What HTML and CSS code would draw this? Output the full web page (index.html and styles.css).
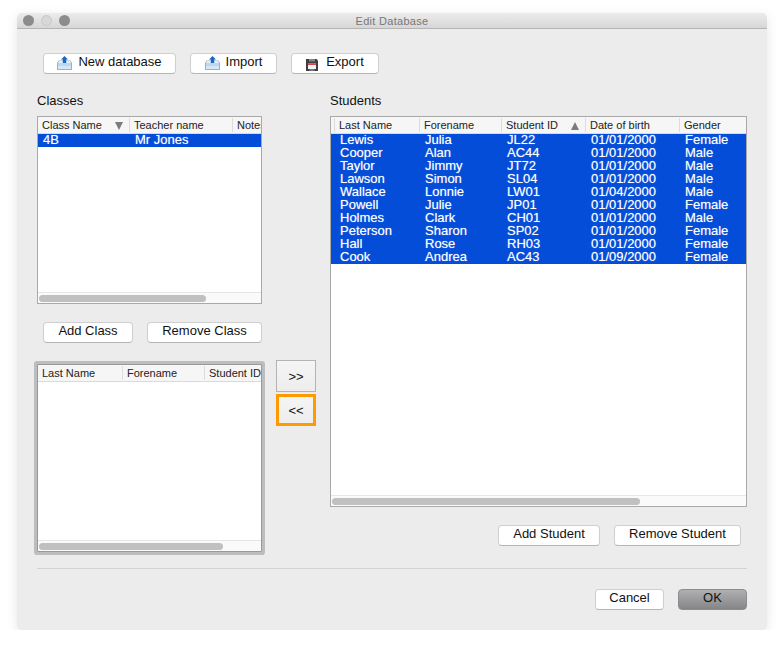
FILE: index.html
```html
<!DOCTYPE html>
<html lang="en">
<head>
  <meta charset="UTF-8">
  <title>Edit Database</title>
  <link rel="stylesheet" href="styles.css">
</head>
<body>
  <div class="window">
    <div class="titlebar">
      <div class="lights">
        <span class="light"></span>
        <span class="light light-off"></span>
        <span class="light"></span>
      </div>
      <div class="title">Edit Database</div>
    </div>

    <div class="content">
      <div class="toolbar">
        <button class="btn btn-new">
          <svg class="icon" viewBox="0 0 15 14"><path d="M1.5 4.5h12L15 7v7H0V7z" fill="#8fb4d6"/><path d="M2 5h11l1 2H1z" fill="#e4eef6"/><path d="M1 7h13v6H1z" fill="#bcd7ee"/><path d="M1 10h13v3H1z" fill="#d5e6f5"/><path d="M7.5 0 11 3.4H9.2V7H5.8V3.4H4z" fill="#1c66c6"/></svg>
          New database
        </button>
        <button class="btn btn-import">
          <svg class="icon" viewBox="0 0 15 14"><path d="M1.5 4.5h12L15 7v7H0V7z" fill="#8fb4d6"/><path d="M2 5h11l1 2H1z" fill="#e4eef6"/><path d="M1 7h13v6H1z" fill="#bcd7ee"/><path d="M1 10h13v3H1z" fill="#d5e6f5"/><path d="M7.5 0 11 3.4H9.2V7H5.8V3.4H4z" fill="#1c66c6"/></svg>
          Import
        </button>
        <button class="btn btn-export">
          <svg class="icon icon-disk" viewBox="0 0 12 12"><path d="M0 0h10.5L12 1.5V12H0z" fill="#3d3d42"/><path d="M3 0h6v2.5H3z" fill="#85858a"/><path d="M2 4.5h8V10H2z" fill="#f2f2f2"/><path d="M2 4.5h8V6H2z" fill="#d5444c"/><path d="M3.5 10h5v2h-5z" fill="#77777c"/></svg>
          Export
        </button>
      </div>

      <div class="columns">
        <!-- classes and the students in the chosen class -->
        <div class="left-col">
          <div class="label">Classes</div>
          <div class="table classes">
            <div class="head">
              <div class="th">Class Name<span class="sort sort-down"></span></div>
              <div class="th">Teacher name</div>
              <div class="th">Notes</div>
            </div>
            <div class="rows">
              <div class="tr">
                <div class="td">4B</div>
                <div class="td">Mr Jones</div>
                <div class="td"></div>
              </div>
            </div>
            <div class="track"><div class="thumb"></div></div>
          </div>

          <div class="class-actions">
            <button class="btn btn-add-class">Add Class</button>
            <button class="btn btn-remove-class">Remove Class</button>
          </div>

          <div class="members">
            <div class="table class-students">
              <div class="head">
                <div class="th">Last Name</div>
                <div class="th">Forename</div>
                <div class="th">Student ID</div>
              </div>
              <div class="rows"></div>
              <div class="track"><div class="thumb"></div></div>
            </div>
            <div class="arrows">
              <button class="arrow">&gt;&gt;</button>
              <button class="arrow arrow-focus">&lt;&lt;</button>
            </div>
          </div>
        </div>

        <!-- all students -->
        <div class="right-col">
          <div class="label">Students</div>
          <div class="table students">
            <div class="head">
              <div class="th">Last Name</div>
              <div class="th">Forename</div>
              <div class="th">Student ID<span class="sort sort-up"></span></div>
              <div class="th">Date of birth</div>
              <div class="th">Gender</div>
            </div>
            <div class="rows">
              <div class="tr"><div class="td">Lewis</div><div class="td">Julia</div><div class="td">JL22</div><div class="td">01/01/2000</div><div class="td">Female</div></div>
              <div class="tr"><div class="td">Cooper</div><div class="td">Alan</div><div class="td">AC44</div><div class="td">01/01/2000</div><div class="td">Male</div></div>
              <div class="tr"><div class="td">Taylor</div><div class="td">Jimmy</div><div class="td">JT72</div><div class="td">01/01/2000</div><div class="td">Male</div></div>
              <div class="tr"><div class="td">Lawson</div><div class="td">Simon</div><div class="td">SL04</div><div class="td">01/01/2000</div><div class="td">Male</div></div>
              <div class="tr"><div class="td">Wallace</div><div class="td">Lonnie</div><div class="td">LW01</div><div class="td">01/04/2000</div><div class="td">Male</div></div>
              <div class="tr"><div class="td">Powell</div><div class="td">Julie</div><div class="td">JP01</div><div class="td">01/01/2000</div><div class="td">Female</div></div>
              <div class="tr"><div class="td">Holmes</div><div class="td">Clark</div><div class="td">CH01</div><div class="td">01/01/2000</div><div class="td">Male</div></div>
              <div class="tr"><div class="td">Peterson</div><div class="td">Sharon</div><div class="td">SP02</div><div class="td">01/01/2000</div><div class="td">Female</div></div>
              <div class="tr"><div class="td">Hall</div><div class="td">Rose</div><div class="td">RH03</div><div class="td">01/01/2000</div><div class="td">Female</div></div>
              <div class="tr"><div class="td">Cook</div><div class="td">Andrea</div><div class="td">AC43</div><div class="td">01/09/2000</div><div class="td">Female</div></div>
            </div>
            <div class="track"><div class="thumb"></div></div>
          </div>
          <div class="student-actions">
            <button class="btn btn-add-student">Add Student</button>
            <button class="btn btn-remove-student">Remove Student</button>
          </div>
        </div>
      </div>

      <div class="footer">
        <button class="btn btn-cancel">Cancel</button>
        <button class="btn btn-ok">OK</button>
      </div>
    </div>
  </div>
</body>
</html>
```

FILE: styles.css
```css
* { box-sizing: border-box; margin: 0; padding: 0; }

body {
  font-family: "Liberation Sans", Arial, sans-serif;
  font-size: 13px;
  color: #111;
  background: #fff;
  padding: 13px 17px 0;
}

.window {
  width: 750px;
  height: 617px;
  background: #ececec;
  border-radius: 5px;
  box-shadow: 0 3px 12px rgba(0,0,0,0.1);
}

/* title bar */
.titlebar {
  display: flex;
  align-items: center;
  justify-content: center;
  position: relative;
  height: 16px;
  background: linear-gradient(#ececec, #d6d6d6);
  border-bottom: 1px solid #b4b4b4;
  border-radius: 5px 5px 0 0;
}

.lights {
  position: absolute;
  left: 6px;
  top: 2px;
  display: flex;
  gap: 7px;
}

.light {
  width: 11px;
  height: 11px;
  border-radius: 50%;
  background: #8c8c8e;
}

.light-off {
  background: #d8d8d8;
  border: 1px solid #c8c8c8;
}

.title {
  font-size: 11px;
  color: #777;
  letter-spacing: 0.3px;
}

.content {
  padding: 24px 20px 0;
}

/* buttons */
.btn {
  display: inline-flex;
  align-items: center;
  justify-content: center;
  height: 21px;
  padding: 0 0 5px;
  font-family: inherit;
  font-size: 13px;
  color: #111;
  background: #fff;
  border: 1px solid #cfcfcf;
  border-bottom-color: #b5b5b5;
  border-radius: 4px;
}

.btn-new { width: 133px; }
.btn-import { width: 87px; }
.btn-export { width: 88px; }
.btn-add-class { width: 90px; }
.btn-remove-class { width: 115px; }
.btn-add-student { width: 102px; }
.btn-remove-student { width: 127px; }
.btn-cancel, .btn-ok { width: 69px; }

.btn-ok {
  background: linear-gradient(#b0b0b2, #858587);
  border-color: #8c8c8c;
}

.toolbar {
  display: flex;
  gap: 14px;
  padding-left: 6px;
  margin-bottom: 20px;
}

.icon {
  width: 15px;
  height: 14px;
  margin-right: 6px;
  margin-top: 4px;
}

.icon-disk {
  width: 12px;
  height: 12px;
  margin-right: 8px;
  margin-top: 8px;
}

.columns {
  display: flex;
  gap: 14px;
}

.left-col {
  width: 279px;
}

.right-col {
  width: 417px;
}

.label {
  font-size: 13px;
  line-height: 14px;
  margin-bottom: 8px;
}

/* list tables */
.table {
  display: flex;
  flex-direction: column;
  width: 225px;
  height: 188px;
  background: #fff;
  border: 1px solid #a9a9a9;
  overflow: hidden;
}

.head {
  flex: none;
  display: grid;
  height: 17px;
  font-size: 11px;
  background: #f6f6f6;
  border-bottom: 1px solid #dadada;
  color: #222;
}

.th {
  position: relative;
  padding-left: 4px;
  border-left: 1px solid #dcdcdc;
  white-space: nowrap;
  overflow: hidden;
  margin: 1px 0;
  line-height: 15px;
}

.rows {
  flex: 1;
}

.tr {
  display: grid;
  height: 13px;
  font-size: 13px;
  line-height: 11px;
  background: #044dd8;
  color: #fff;
  text-shadow: 0 0 1px rgba(255,255,255,0.5);
}

.td {
  padding-left: 6px;
  white-space: nowrap;
}

.classes .head, .classes .tr {
  grid-template-columns: 91px 103px 1fr;
}

.class-students .head {
  grid-template-columns: 84px 82px 1fr;
}

.classes .th:first-child, .class-students .th:first-child {
  border-left: none;
}

.classes .td:first-child {
  padding-left: 5px;
}

.students {
  width: 417px;
  height: 391px;
}

.students .head, .students .tr {
  padding-left: 3px;
  grid-template-columns: 85px 82px 84px 94px 1fr;
}

/* sort arrows in the headers */
.sort {
  position: absolute;
  top: 4px;
  width: 0;
  height: 0;
  border-left: 4px solid transparent;
  border-right: 4px solid transparent;
}

.sort-down {
  left: 77px;
  border-top: 8px solid #7c7c7c;
}

.sort-up {
  left: 69px;
  border-bottom: 8px solid #7c7c7c;
}

/* horizontal scrollbars */
.track {
  flex: none;
  height: 11px;
  padding: 2px 1px 0;
  background: #fafafa;
  border-top: 1px solid #e6e6e6;
}

.thumb {
  height: 7px;
  background: #c0c0c0;
  border-radius: 4px;
}

.classes .thumb { width: 167px; }
.class-students .thumb { width: 184px; }
.students .thumb { width: 308px; }

.class-actions {
  display: flex;
  gap: 14px;
  padding-left: 6px;
  margin-top: 18px;
}

.members {
  display: flex;
  gap: 14px;
  margin-top: 21px;
}

.class-students {
  flex: none;
  border-color: #999;
  box-shadow: 0 0 0 3px #bdbdbd;
  border-radius: 1px;
}

.arrows {
  display: flex;
  flex-direction: column;
  gap: 2px;
  margin-top: -4px;
}

.arrow {
  width: 40px;
  height: 32px;
  font-family: inherit;
  font-size: 13px;
  color: #111;
  background: linear-gradient(#f5f5f5, #ededed);
  border: 1px solid #b3b3b3;
}

.arrow-focus {
  border: 3px solid #ff9a00;
}

.student-actions {
  display: flex;
  justify-content: flex-end;
  gap: 14px;
  padding-right: 6px;
  margin-top: 18px;
}

.footer {
  display: flex;
  justify-content: flex-end;
  gap: 14px;
  margin-top: 16px;
  padding-top: 20px;
  border-top: 1px solid #d4d4d4;
}
```
